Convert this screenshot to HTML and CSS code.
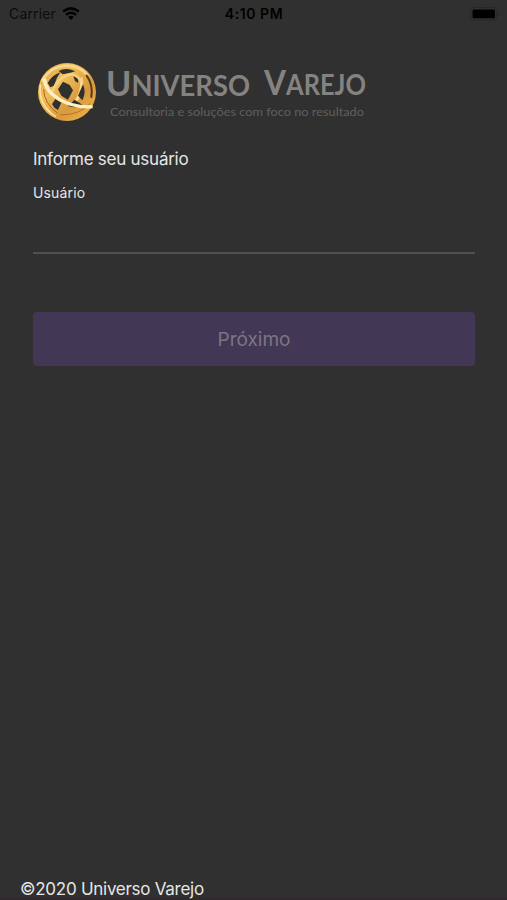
FILE: index.html
```
<!DOCTYPE html>
<html lang="pt-BR">
<head>
    <meta charset="UTF-8">
    <meta name="viewport" content="width=device-width, initial-scale=1.0">
    <title>Universo Varejo</title>
    <link rel="stylesheet" href="styles.css">
</head>
<body>

    <!-- Status bar -->
    <header class="status-bar">
        <div class="carrier">
            <span>Carrier</span>
            <svg class="wifi" width="18" height="14" viewBox="0 0 18 14">
                <path d="M1.2 4.6 Q9 -1.8 16.8 4.6" fill="none" stroke="#000" stroke-width="2.6"/>
                <path d="M4 7.8 Q9 3.6 14 7.8" fill="none" stroke="#000" stroke-width="2.3"/>
                <path d="M6.1 10 Q9 7.6 11.9 10 L9 13 Z" fill="#000"/>
            </svg>
        </div>
        <div class="time">4:10 PM</div>
        <svg class="battery" width="31" height="14" viewBox="0 0 31 14">
            <rect x="0.5" y="0.5" width="26" height="12.5" rx="3" fill="none" stroke="#272727"/>
            <rect x="2.5" y="2.5" width="22.5" height="8.8" rx="1.5" fill="#000"/>
            <path d="M28 4.5 Q30 6.7 28 9 Z" fill="#242424"/>
        </svg>
    </header>

    <main>
        <!-- Logo -->
        <svg class="logo" width="334" height="66" viewBox="33 58 334 66">
            <defs>
                <linearGradient id="gold" x1="0" y1="0" x2="1" y2="1">
                    <stop offset="0" stop-color="#e0a846"/>
                    <stop offset="0.35" stop-color="#f0bc59"/>
                    <stop offset="0.65" stop-color="#d89a3c"/>
                    <stop offset="1" stop-color="#f0b94e"/>
                </linearGradient>
            </defs>
            <!-- the globe is drawn on a 225 unit grid -->
            <g transform="translate(30 55) scale(0.3333)">
                <circle cx="111" cy="111" r="87" fill="url(#gold)"/>
                <g fill="none" stroke-linecap="round">
                    <path d="M37 76 Q65 32 112 32 Q150 34 172 60" stroke="#f8d68a" stroke-width="8"/>
                    <path d="M31 90 Q24 150 76 184" stroke="#fbe19a" stroke-width="5"/>
                    <path d="M41 104 Q42 145 82 174" stroke="#a9661f" stroke-width="3"/>
                    <path d="M132 146 Q160 112 154 72" stroke="#fbd98f" stroke-width="9"/>
                    <path d="M92 180 Q150 180 180 146" stroke="#b87126" stroke-width="3"/>
                    <path d="M170 62 Q190 90 184 126" stroke="#593a17" stroke-width="6"/>
                </g>
                <g fill="#303030">
                    <path d="M84 103 L99 80 L119 90 L129 106 L114 134 L94 122 Z"/>
                    <path d="M53 84 Q66 60 91 52 Q79 68 72 92 L61 97 Z"/>
                    <path d="M86 48 Q108 36 136 49 L118 54 L98 58 Z"/>
                    <path d="M130 64 L146 64 L144 84 L135 78 Z"/>
                    <path d="M159 88 Q170 112 157 136 L144 122 Z"/>
                    <path d="M134 134 L158 150 Q140 162 114 153 Z"/>
                    <path d="M66 148 L76 132 L94 143 L84 165 Q72 160 66 148 Z"/>
                </g>
                <path d="M66 112 Q85 62 126 58 Q145 62 154 80" fill="none" stroke="#f6cf80" stroke-width="8"/>
                <path d="M43 70 C45 118 110 160 188 155" fill="none" stroke="#fff0c2" stroke-width="10"/>
            </g>
            <g class="brand">
                <text x="106" y="96" textLength="144" lengthAdjust="spacingAndGlyphs"><tspan class="cap">U</tspan>NIVERSO</text>
                <text x="264" y="95" textLength="102" lengthAdjust="spacingAndGlyphs"><tspan class="cap">V</tspan>AREJO</text>
            </g>
            <text class="tagline" x="110" y="115.5" textLength="254" lengthAdjust="spacingAndGlyphs">Consultoria e soluções com foco no resultado</text>
        </svg>

        <!-- User form -->
        <form class="login-form">
            <h1>Informe seu usuário</h1>
            <label for="usuario">Usuário</label>
            <input type="text" id="usuario">
            <button type="submit" disabled>Próximo</button>
        </form>
    </main>

    <footer>©2020 Universo Varejo</footer>

</body>
</html>
```
FILE: styles.css
```
* {
    box-sizing: border-box;
}
body {
    display: flex;
    flex-direction: column;
    height: 900px;
    margin: 0;
    overflow: hidden;
    font-family: Inter, sans-serif;
    color: #e6e6e6;
    background-color: #303030;
}
.status-bar {
    display: grid;
    grid-template-columns: 1fr auto 1fr;
    align-items: center;
    height: 27px;
    padding: 0 6px 0 9px;
    font-size: 14px;
    color: #000;
}
.carrier {
    display: flex;
    align-items: center;
    gap: 6px;
    letter-spacing: 0.15px;
    color: #0c0c0c;
}
.time {
    margin-right: 2px;
    font-weight: 600;
    letter-spacing: 0.55px;
}
.battery {
    justify-self: end;
}
main {
    flex: 1;
    padding: 31px 32px 0 33px;
}
.logo {
    display: block;
    overflow: visible;
}
.brand {
    font-family: Lato, sans-serif;
    font-size: 28px;
    font-weight: 700;
    fill: #858381;
}
.brand .cap {
    font-size: 35px;
}
.tagline {
    font-family: Lato, sans-serif;
    font-size: 12px;
    font-weight: 400;
    fill: #5f5f5f;
}
.login-form {
    display: flex;
    flex-direction: column;
    margin-top: 24px;
}
.login-form h1 {
    margin: 0;
    font-size: 17px;
    font-weight: 400;
    line-height: 22px;
    letter-spacing: -0.25px;
}
.login-form label {
    margin-top: 13px;
    font-size: 14px;
    line-height: 20px;
    letter-spacing: 0.15px;
}
.login-form input {
    height: 51px;
    padding: 0;
    border: none;
    border-bottom: 2px solid #505050;
    outline: none;
    font: inherit;
    color: inherit;
    background: transparent;
}
.login-form button {
    height: 54px;
    margin-top: 58px;
    padding: 0;
    border: none;
    border-radius: 4px;
    font-family: inherit;
    font-size: 19px;
    color: #7c7681;
    background-color: #423855;
}
footer {
    height: 24px;
    padding-left: 20px;
    border-bottom: 3px solid #30292d;
    font-size: 17px;
    line-height: 27px;
    letter-spacing: -0.27px;
}
```
